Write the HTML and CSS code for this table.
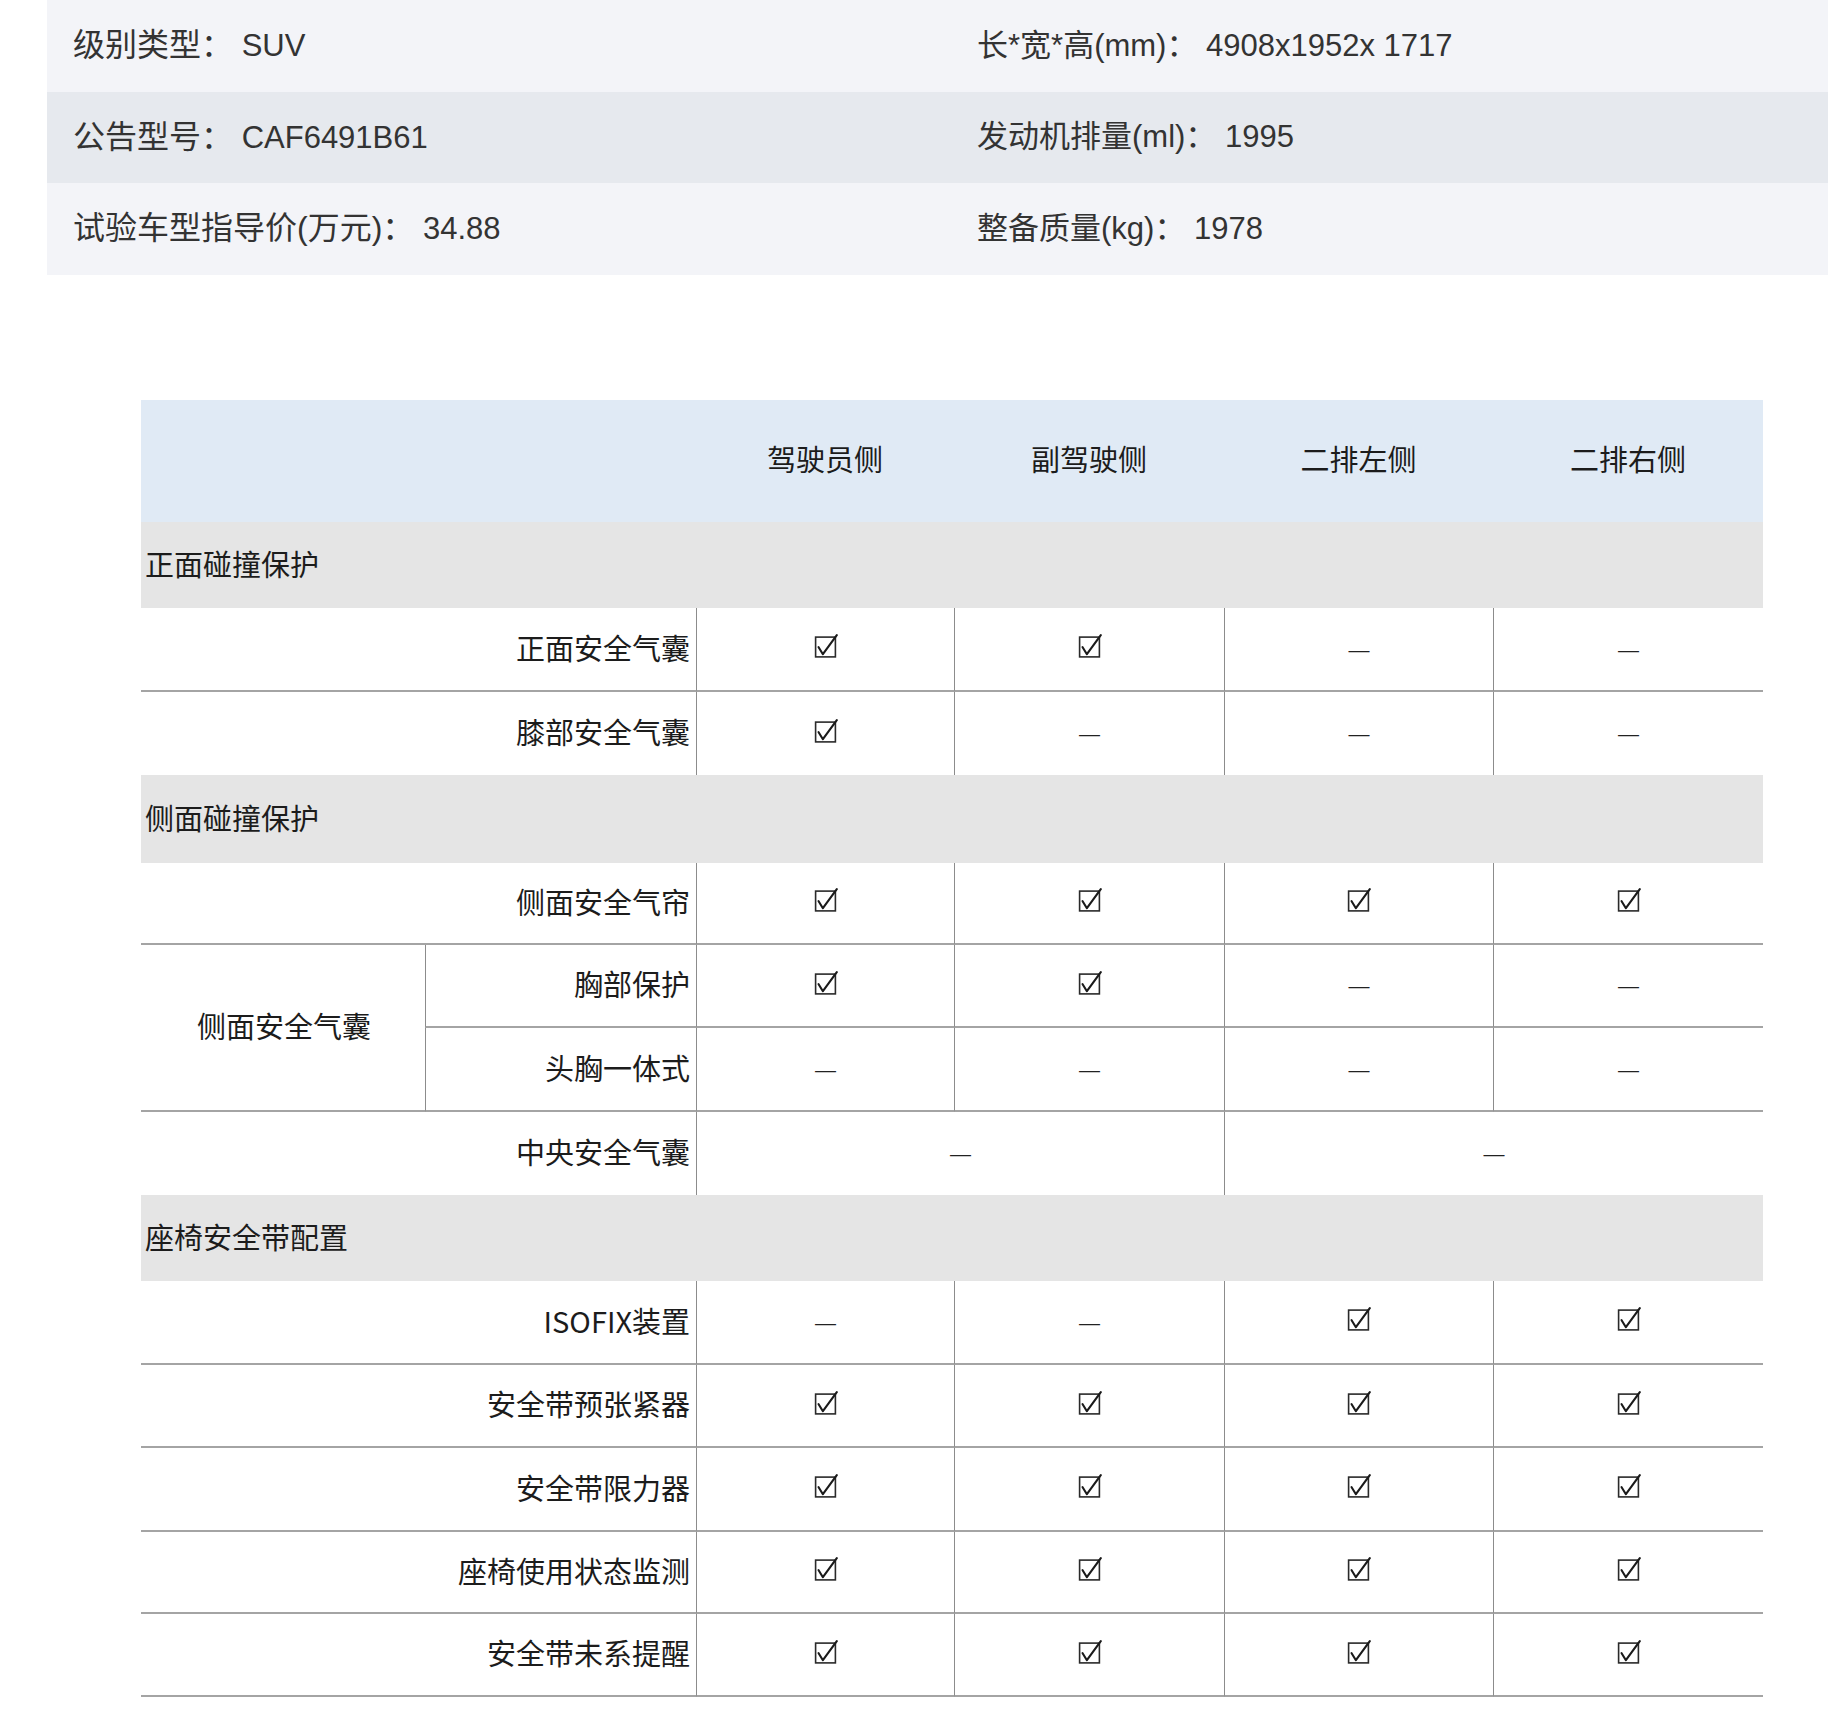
FILE: index.html
```html
<!DOCTYPE html>
<html lang="zh-CN">
<head>
<meta charset="utf-8">
<title>车型信息</title>
<link rel="stylesheet" href="styles.css">
</head>
<body>
<svg class="defs" aria-hidden="true">
  <symbol id="chk" viewBox="0 0 24 24">
    <rect x="1.6" y="3.1" width="19.8" height="19.8" fill="none" stroke="#2a2a2a" stroke-width="1.6"/>
    <path d="M4.6 13.2 L8.9 20.2 L22.8 1.2" fill="none" stroke="#1a1a1a" stroke-width="2.1" stroke-linejoin="round" stroke-linecap="round"/>
  </symbol>
</svg>

<section class="info">
  <div class="info-row">
    <div class="info-cell first"><span class="k">级别类型：</span> <span class="v">SUV</span></div>
    <div class="info-cell"><span class="k">长*宽*高(mm)：</span> <span class="v">4908x1952x 1717</span></div>
  </div>
  <div class="info-row alt">
    <div class="info-cell first"><span class="k">公告型号：</span> <span class="v">CAF6491B61</span></div>
    <div class="info-cell"><span class="k">发动机排量(ml)：</span> <span class="v">1995</span></div>
  </div>
  <div class="info-row">
    <div class="info-cell first"><span class="k">试验车型指导价(万元)：</span> <span class="v">34.88</span></div>
    <div class="info-cell"><span class="k">整备质量(kg)：</span> <span class="v">1978</span></div>
  </div>
</section>

<div class="spec" role="table">
  <div class="h sp2"></div>
  <div class="h">驾驶员侧</div>
  <div class="h">副驾驶侧</div>
  <div class="h">二排左侧</div>
  <div class="h">二排右侧</div>

  <div class="sec">正面碰撞保护</div>

  <div class="lb sp2 bb">正面安全气囊</div>
  <div class="c bb"><svg class="chk"><use href="#chk"/></svg></div>
  <div class="c bb"><svg class="chk"><use href="#chk"/></svg></div>
  <div class="c bb"><span class="dash">—</span></div>
  <div class="c bb"><span class="dash">—</span></div>

  <div class="lb sp2">膝部安全气囊</div>
  <div class="c"><svg class="chk"><use href="#chk"/></svg></div>
  <div class="c"><span class="dash">—</span></div>
  <div class="c"><span class="dash">—</span></div>
  <div class="c"><span class="dash">—</span></div>

  <div class="sec">侧面碰撞保护</div>

  <div class="lb sp2 bb">侧面安全气帘</div>
  <div class="c bb"><svg class="chk"><use href="#chk"/></svg></div>
  <div class="c bb"><svg class="chk"><use href="#chk"/></svg></div>
  <div class="c bb"><svg class="chk"><use href="#chk"/></svg></div>
  <div class="c bb"><svg class="chk"><use href="#chk"/></svg></div>

  <div class="grp bb">侧面安全气囊</div>
  <div class="lb sub bb">胸部保护</div>
  <div class="c bb"><svg class="chk"><use href="#chk"/></svg></div>
  <div class="c bb"><svg class="chk"><use href="#chk"/></svg></div>
  <div class="c bb"><span class="dash">—</span></div>
  <div class="c bb"><span class="dash">—</span></div>

  <div class="lb sub bb">头胸一体式</div>
  <div class="c bb"><span class="dash">—</span></div>
  <div class="c bb"><span class="dash">—</span></div>
  <div class="c bb"><span class="dash">—</span></div>
  <div class="c bb"><span class="dash">—</span></div>

  <div class="lb sp2">中央安全气囊</div>
  <div class="c sp2"><span class="dash">—</span></div>
  <div class="c sp2"><span class="dash">—</span></div>

  <div class="sec">座椅安全带配置</div>

  <div class="lb sp2 bb">ISOFIX装置</div>
  <div class="c bb"><span class="dash">—</span></div>
  <div class="c bb"><span class="dash">—</span></div>
  <div class="c bb"><svg class="chk"><use href="#chk"/></svg></div>
  <div class="c bb"><svg class="chk"><use href="#chk"/></svg></div>

  <div class="lb sp2 bb">安全带预张紧器</div>
  <div class="c bb"><svg class="chk"><use href="#chk"/></svg></div>
  <div class="c bb"><svg class="chk"><use href="#chk"/></svg></div>
  <div class="c bb"><svg class="chk"><use href="#chk"/></svg></div>
  <div class="c bb"><svg class="chk"><use href="#chk"/></svg></div>

  <div class="lb sp2 bb">安全带限力器</div>
  <div class="c bb"><svg class="chk"><use href="#chk"/></svg></div>
  <div class="c bb"><svg class="chk"><use href="#chk"/></svg></div>
  <div class="c bb"><svg class="chk"><use href="#chk"/></svg></div>
  <div class="c bb"><svg class="chk"><use href="#chk"/></svg></div>

  <div class="lb sp2 bb">座椅使用状态监测</div>
  <div class="c bb"><svg class="chk"><use href="#chk"/></svg></div>
  <div class="c bb"><svg class="chk"><use href="#chk"/></svg></div>
  <div class="c bb"><svg class="chk"><use href="#chk"/></svg></div>
  <div class="c bb"><svg class="chk"><use href="#chk"/></svg></div>

  <div class="lb sp2 bb">安全带未系提醒</div>
  <div class="c bb"><svg class="chk"><use href="#chk"/></svg></div>
  <div class="c bb"><svg class="chk"><use href="#chk"/></svg></div>
  <div class="c bb"><svg class="chk"><use href="#chk"/></svg></div>
  <div class="c bb"><svg class="chk"><use href="#chk"/></svg></div>
</div>
</body>
</html>
```

FILE: styles.css
```css
* { box-sizing: border-box; }

html, body {
  margin: 0;
  padding: 0;
  background: #ffffff;
}

body {
  width: 1828px;
  min-height: 1732px;
  font-family: "Liberation Sans", "Noto Sans CJK SC", sans-serif;
  color: #333333;
}

.defs {
  position: absolute;
  width: 0;
  height: 0;
  overflow: hidden;
}

/* ---------- info panel ---------- */
.info {
  margin-left: 47px;
}

.info-row {
  display: grid;
  grid-template-columns: 904px 1fr;
  height: 92px;
  align-items: center;
  background: #f3f4f8;
}

.info-row:nth-child(2) {
  height: 91px;
}

.info-row.alt {
  background: #e6e9ee;
}

.info-cell {
  padding-left: 26px;
  padding-bottom: 2px;
  font-size: 31px;
  line-height: 1;
  white-space: nowrap;
}

.info-cell.first .k {
  font-size: 32px;
}

/* ---------- spec table ---------- */
.spec {
  display: grid;
  grid-template-columns: 284px 271px 258px 270px 269px 270px;
  grid-template-rows: 122px 86px 84px 83px 88px 82px 83px 84px 83px 86px 84px 83px 84px 82px 83px;
  width: 1622px;
  margin: 125px 0 0 141px;
  font-family: "Noto Sans CJK SC", "Liberation Sans", sans-serif;
  font-size: 29px;
  line-height: 1.2;
  color: #1c1c1c;
}

.spec > div {
  display: flex;
  align-items: center;
  min-width: 0;
}

.h {
  background: #e0eaf5;
  justify-content: center;
  padding-bottom: 5px;
}

.sp2 { grid-column: span 2; }

.sec {
  grid-column: span 6;
  background: #e5e5e5;
  padding-left: 4px;
  padding-bottom: 4px;
}

.lb {
  justify-content: flex-end;
  padding-right: 6px;
  padding-bottom: 4px;
  background: #ffffff;
}

.sub {
  border-left: 1px solid #8c8c8c;
}

.grp {
  grid-row: span 2;
  justify-content: center;
  padding-left: 2px;
  padding-bottom: 4px;
}

.c {
  justify-content: center;
  border-left: 1px solid #8c8c8c;
}

.bb {
  border-bottom: 2px solid #a4a4a4;
}

.chk {
  width: 24px;
  height: 24px;
  display: block;
  margin-top: -6px;
}

.dash {
  font-family: "Liberation Sans", sans-serif;
  font-size: 21px;
  line-height: 1;
  color: #222222;
}
```
